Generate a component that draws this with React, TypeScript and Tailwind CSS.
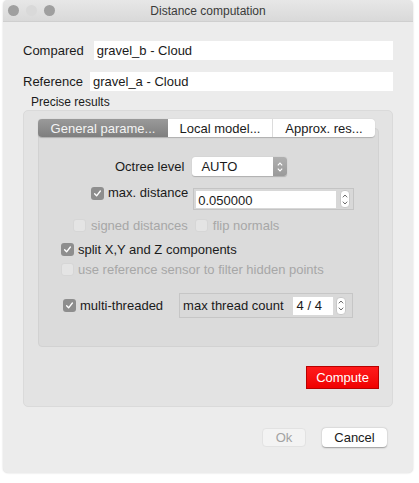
import React from 'react';

const Check: React.FC<{ checked?: boolean; disabled?: boolean }> = ({ checked, disabled }) => {
  if (checked) {
    return (
      <div className="w-[13px] h-[13px] shrink-0 rounded-[3px] bg-[#8e8e8e] flex items-center justify-center">
        <svg width="9" height="9" viewBox="0 0 10 10" fill="none">
          <path d="M1.8 5.3 L4 7.6 L8.2 2.2" stroke="#ffffff" strokeWidth="1.5" strokeLinecap="round" strokeLinejoin="round" />
        </svg>
      </div>
    );
  }
  return (
    <div
      className={`w-[13px] h-[13px] shrink-0 rounded-[3px] border ${
        disabled ? 'bg-[#e4e4e4] border-[#d6d6d6]' : 'bg-white border-[#b5b5b5]'
      }`}
    />
  );
};

// little up/down arrows of a spin box
const Spinner: React.FC = () => (
  <div className="w-[10px] h-[18px] rounded-[4px] bg-white border border-[#c9c9c9] flex flex-col items-center justify-center gap-[3px]">
    <svg width="6" height="4" viewBox="0 0 6 4" fill="none">
      <path d="M0.8 3.3 L3 1 L5.2 3.3" stroke="#6b6b6b" strokeWidth="1" />
    </svg>
    <svg width="6" height="4" viewBox="0 0 6 4" fill="none">
      <path d="M0.8 0.7 L3 3 L5.2 0.7" stroke="#6b6b6b" strokeWidth="1" />
    </svg>
  </div>
);

const App: React.FC = () => {
  return (
    <div className="w-[419px] h-[483px] bg-white font-['Liberation_Sans',Arial,sans-serif] text-[13px] text-[#1a1a1a] leading-none">
      <div className="ml-[3px] w-[410px] h-[473px] bg-[#ececec] rounded-[5px] overflow-hidden shadow-[0_0_2px_rgba(0,0,0,0.18)] flex flex-col">
        {/* title bar */}
        <div className="h-[22px] shrink-0 flex items-center bg-gradient-to-b from-[#e7e7e7] to-[#d9d9d9] border-b border-[#cfcfcf]">
          <div className="w-[60px] pl-[5px] flex items-center gap-[7px]">
            <div className="w-[11px] h-[11px] rounded-full bg-[#9f9f9f]" />
            <div className="w-[11px] h-[11px] rounded-full bg-[#d9d9d9]" />
            <div className="w-[11px] h-[11px] rounded-full bg-[#9f9f9f]" />
          </div>
          <div className="flex-1 text-center text-[12px] text-[#3a3a3a]">Distance computation</div>
          <div className="w-[60px]" />
        </div>

        <div className="px-[20px] pt-[19px] flex flex-col">
          <div className="flex items-center h-[19px] gap-[10px]">
            <span>Compared</span>
            <div className="flex-1 h-[19px] bg-white flex items-center pl-[3px]">gravel_b - Cloud</div>
          </div>
          <div className="mt-[12px] flex items-center h-[19px] gap-[7px]">
            <span>Reference</span>
            <div className="flex-1 h-[19px] bg-white flex items-center pl-[3px]">gravel_a - Cloud</div>
          </div>
          <div className="mt-[4px] pl-[8px] text-[12px] leading-[14px]">Precise results</div>

          {/* group box */}
          <div className="mt-[1px] h-[297px] rounded-[5px] bg-[#e3e3e3] border border-[#dadada] pt-[8px] pl-[14px] flex flex-col">
            <div className="relative z-10 w-[337px] h-[18px] flex rounded-[4px] overflow-hidden shadow-[0_0.5px_1px_rgba(0,0,0,0.2)]">
              <div className="w-[130px] flex items-center justify-center bg-gradient-to-b from-[#9a9a9a] to-[#7f7f7f] text-[#f4f4f4]">
                General parame...
              </div>
              <div className="w-[105px] flex items-center justify-center bg-white border-r border-[#dcdcdc]">
                Local model...
              </div>
              <div className="flex-1 flex items-center justify-center bg-white">Approx. res...</div>
            </div>

            {/* tab pane */}
            <div className="-mt-[9px] w-[341px] h-[219px] rounded-[4px] bg-[#dbdbdb] border border-[#d2d2d2] pt-[28px] flex flex-col">
              <div className="pl-[76px] flex items-center h-[19px] gap-[8px]">
                <span>Octree level</span>
                <div className="w-[95px] h-[19px] rounded-[3px] bg-white flex shadow-[0_0.5px_1px_rgba(0,0,0,0.2)]">
                  <div className="flex-1 flex items-center pl-[9px]">AUTO</div>
                  <div className="w-[14px] rounded-r-[3px] bg-gradient-to-b from-[#b0b0b0] to-[#9a9a9a] flex flex-col items-center justify-center gap-[2px]">
                    <svg width="6" height="4" viewBox="0 0 6 4" fill="none">
                      <path d="M0.8 3.3 L3 1 L5.2 3.3" stroke="#ffffff" strokeWidth="1.1" />
                    </svg>
                    <svg width="6" height="4" viewBox="0 0 6 4" fill="none">
                      <path d="M0.8 0.7 L3 3 L5.2 0.7" stroke="#ffffff" strokeWidth="1.1" />
                    </svg>
                  </div>
                </div>
              </div>

              <div className="mt-[12px] pl-[52px] flex items-start">
                <div className="-mt-[1px] flex items-center gap-[4px]">
                  <Check checked />
                  <span className="-mt-[3px]">max. distance</span>
                </div>
                <div className="ml-[5px] w-[161px] h-[22px] border border-[#c4c4c4] bg-[#d8d8d8] flex items-center pl-[2px] pr-[3px] gap-[4px]">
                  <div className="flex-1 h-[17px] bg-white flex items-center pl-[2px] pt-[3px]">0.050000</div>
                  <Spinner />
                </div>
              </div>

              <div className="mt-[7px] pl-[34px] h-[16px] flex items-center text-[#a7a7a7]">
                <Check disabled />
                <span className="ml-[5px]">signed distances</span>
                <span className="ml-[7px]">
                  <Check disabled />
                </span>
                <span className="ml-[5px]">flip normals</span>
              </div>

              <div className="mt-[8px] pl-[22px] h-[16px] flex items-center gap-[4px]">
                <Check checked />
                <span>split X,Y and Z components</span>
              </div>

              <div className="mt-[4px] pl-[22px] h-[16px] flex items-center gap-[4px] text-[#a7a7a7]">
                <Check disabled />
                <span>use reference sensor to filter hidden points</span>
              </div>

              <div className="mt-[16px] pl-[24px] flex items-center">
                <div className="flex items-center gap-[4px]">
                  <Check checked />
                  <span>multi-threaded</span>
                </div>
                <div className="ml-[16px] w-[174px] h-[25px] border border-[#c6c6c6] bg-[#d9d9d9] flex items-center pl-[3px] pr-[4px]">
                  <span>max thread count</span>
                  <div className="ml-[9px] w-[40px] h-[18px] bg-white flex items-center pl-[4px]">4 / 4</div>
                  <div className="ml-[3px]">
                    <Spinner />
                  </div>
                </div>
              </div>
            </div>

            <div className="mt-[19px] pr-[13px] flex justify-end">
              <div className="w-[73px] h-[23px] bg-gradient-to-b from-[#ff1a1a] to-[#f00000] border border-[#b80000] flex items-center justify-center text-white">
                Compute
              </div>
            </div>
          </div>

          {/* dialog buttons */}
          <div className="mt-[21px] pr-[6px] flex justify-end gap-[16px]">
            <div className="w-[44px] h-[19px] rounded-[4px] bg-[#f3f3f3] border border-[#e2e2e2] flex items-center justify-center text-[#a2a2a2]">
              Ok
            </div>
            <div className="w-[65px] h-[19px] rounded-[4px] bg-white shadow-[0_0.5px_1.5px_rgba(0,0,0,0.35)] flex items-center justify-center">
              Cancel
            </div>
          </div>
        </div>
      </div>
    </div>
  );
};

export default App;
